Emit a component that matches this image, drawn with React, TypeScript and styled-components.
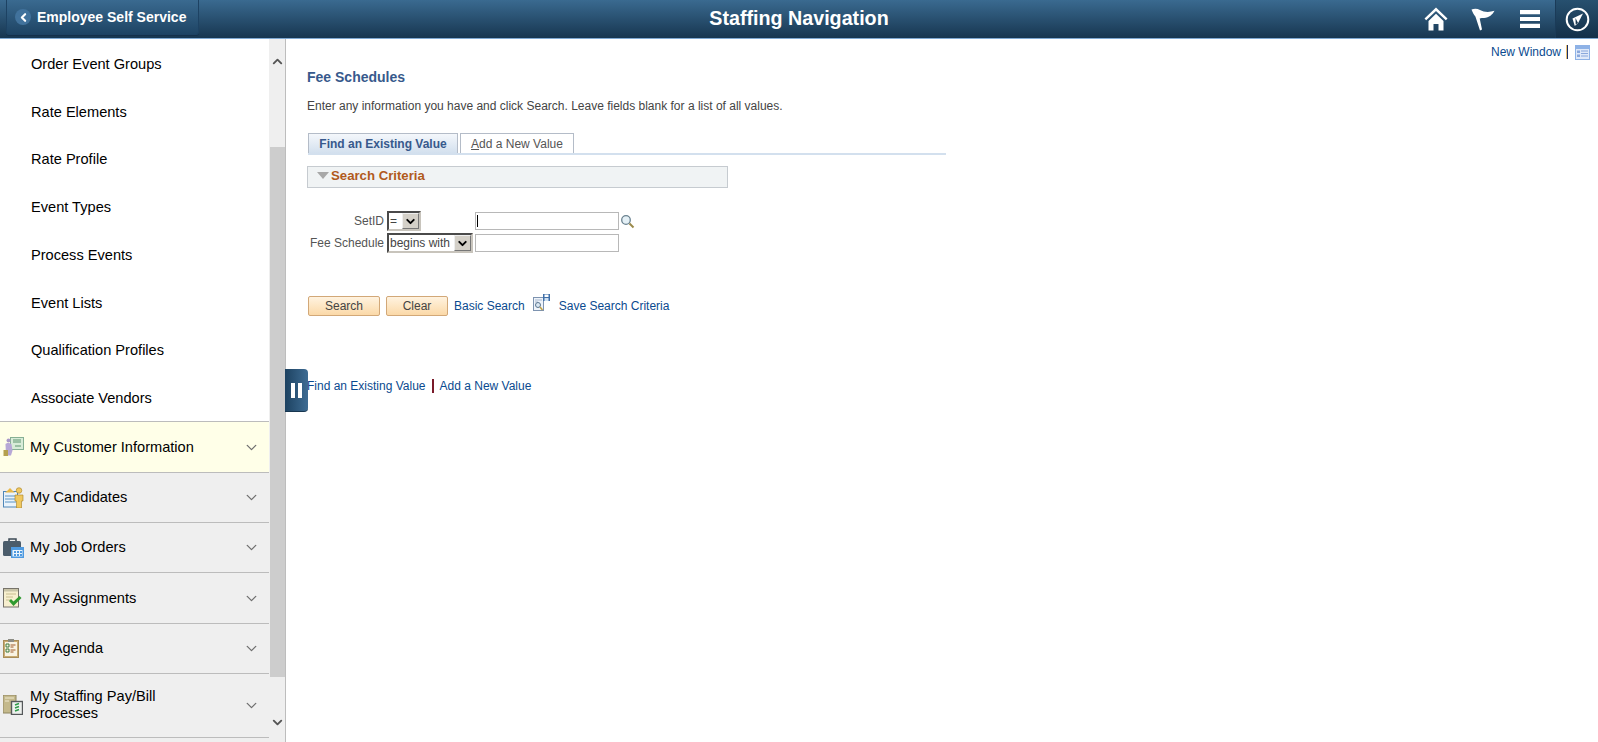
import React from 'react'
import styled, { createGlobalStyle } from 'styled-components'
import { ChevronDown, ChevronLeft, ChevronUp } from 'lucide-react'

const GlobalStyle = createGlobalStyle`
  html, body {
    margin: 0;
    padding: 0;
    height: 100%;
    overflow: hidden;
    background: #fff;
    font-family: "Liberation Sans", Arial, sans-serif;
  }
  * { box-sizing: border-box; }
`

const Page = styled.div`
  width: 1598px;
  height: 742px;
  display: flex;
  flex-direction: column;
  overflow: hidden;
`

const Banner = styled.header`
  height: 39px;
  flex: none;
  display: grid;
  grid-template-columns: 1fr auto 1fr;
  align-items: stretch;
  background: linear-gradient(#3a6a90, #173650);
  border-bottom: 1.5px solid #7fa9d3;
`

const BackButton = styled.button`
  justify-self: start;
  margin-left: 6px;
  width: 193px;
  height: 35px;
  display: flex;
  align-items: center;
  gap: 6px;
  padding: 0 0 0 8px;
  border: 1px solid #1d4263;
  border-top: 0;
  border-radius: 0 0 3px 3px;
  background: linear-gradient(#3a6a90, #1e4464);
  box-shadow: 0 1px 0 #14304a;
  color: #fff;
  font: bold 14px "Liberation Sans", Arial, sans-serif;
`

const BackDot = styled.span`
  width: 16px;
  height: 16px;
  border-radius: 50%;
  background: #41729c;
  display: flex;
  align-items: center;
  justify-content: center;
`

const BannerTitle = styled.h1`
  margin: 0;
  align-self: center;
  color: #fff;
  font-size: 19.7px;
  font-weight: bold;
  position: relative;
  top: -1px;
`

const BannerIcons = styled.div`
  justify-self: end;
  display: flex;
  align-items: stretch;
`

const BannerIcon = styled.div`
  width: 47px;
  display: flex;
  align-items: center;
  justify-content: center;
`

const NavBarButton = styled(BannerIcon)`
  width: 43px;
  margin-left: 2px;
  background: linear-gradient(#27506f, #143049);
  border-left: 1px solid #1b3b58;
`

const Body = styled.div`
  flex: 1;
  min-height: 0;
  display: flex;
  position: relative;
`

const Sidebar = styled.aside`
  width: 286px;
  flex: none;
  display: flex;
  border-right: 1px solid #bdbdbd;
`

const MenuColumn = styled.div`
  width: 269px;
  flex: none;
  display: flex;
  flex-direction: column;
  background: #efefef;
`

const SubItems = styled.div`
  height: 382.4px;
  flex: none;
  padding-top: 1px;
  background: #fff;
`

const SubItem = styled.div`
  height: 47.75px;
  padding-left: 31px;
  display: flex;
  align-items: center;
  font-size: 14.6px;
  color: #000;
`

const Folder = styled.div<{ $hover?: boolean; $tall?: boolean }>`
  height: ${({ $tall }) => ($tall ? '64.6px' : '50.33px')};
  flex: none;
  display: flex;
  align-items: center;
  border-top: 1px solid #bcbcbc;
  border-bottom: ${({ $tall }) => ($tall ? '1px solid #bcbcbc' : '0')};
  background: ${({ $hover }) => ($hover ? '#ffffe8' : '#efefef')};
  font-size: 14.6px;
  line-height: 17px;
  color: #000;
`

const FolderIconSlot = styled.div`
  width: 30px;
  flex: none;
  padding-left: 3px;
  display: flex;
`

const FolderLabel = styled.div`
  flex: 1;
  max-width: 175px;
`

const FolderChevron = styled.div`
  margin-left: auto;
  width: 26px;
  flex: none;
  color: #6e6e6e;
  display: flex;
`

const ScrollBar = styled.div`
  width: 16px;
  flex: none;
  background: #efefef;
  position: relative;
  display: flex;
  flex-direction: column;
  justify-content: space-between;
  align-items: center;
  padding: 15px 0 12px;
  color: #555;
`

const ScrollThumb = styled.div`
  position: absolute;
  left: 1px;
  right: 0;
  top: 108px;
  height: 530px;
  background: #cdcdcd;
`

const Handle = styled.div`
  position: absolute;
  left: 285px;
  top: 330px;
  width: 23px;
  height: 43px;
  border-radius: 0 4px 4px 0;
  background: linear-gradient(to right, #1d4261, #3e6c93);
  border-bottom: 1px solid #173650;
  display: flex;
  align-items: center;
  justify-content: center;
  gap: 3px;
`

const HandleBar = styled.span`
  width: 4px;
  height: 15px;
  background: #fff;
`

const Content = styled.main`
  flex: 1;
  min-width: 0;
  display: flex;
  flex-direction: column;
`

const TopLinks = styled.div`
  height: 20px;
  margin-top: 3px;
  padding-right: 8px;
  display: flex;
  justify-content: flex-end;
  align-items: center;
`

const SmallLink = styled.a`
  color: #0a4a8f;
  font-size: 12px;
  white-space: nowrap;
`

const Pipe = styled.span<{ $color?: string }>`
  width: 2px;
  height: 14px;
  background: ${({ $color }) => $color || 'linear-gradient(to right, #e8c070 50%, #1c2f66 50%)'};
`

const TopPipe = styled(Pipe)`
  margin: 0 7px 0 5px;
`

const Inner = styled.div`
  padding: 7px 0 0 21px;
  display: flex;
  flex-direction: column;
`

const PageTitle = styled.h2`
  margin: 0;
  font-size: 14px;
  line-height: 17px;
  font-weight: bold;
  color: #37598c;
`

const Hint = styled.p`
  margin: 13px 0 0;
  font-size: 12px;
  line-height: 14px;
  color: #444;
`

const Tabs = styled.div`
  margin: 20px 0 0 1px;
  width: 638px;
  height: 22px;
  display: flex;
  gap: 2px;
  align-items: flex-end;
  border-bottom: 2px solid #d3e0ee;
`

const Tab = styled.div<{ $active?: boolean }>`
  height: 20px;
  width: ${({ $active }) => ($active ? '150px' : '114px')};
  display: flex;
  align-items: center;
  justify-content: center;
  border: 1px solid #b4bcc8;
  border-bottom: 0;
  background: ${({ $active }) => ($active ? 'linear-gradient(#f4f7fb, #d3e0ee)' : '#fff')};
  font-size: 12px;
  font-weight: ${({ $active }) => ($active ? 'bold' : 'normal')};
  color: ${({ $active }) => ($active ? '#37598c' : '#555')};
`

const Collapsible = styled.div`
  margin-top: 11px;
  width: 421px;
  height: 22px;
  display: flex;
  align-items: center;
  gap: 2px;
  padding: 0 0 3px 9px;
  background: #f0f3f4;
  border: 1px solid #c6cbd0;
  font-size: 13.2px;
  font-weight: bold;
  color: #b05a1c;
`

const Triangle = styled.span`
  width: 0;
  height: 0;
  border-left: 6.5px solid transparent;
  border-right: 6.5px solid transparent;
  border-top: 7px solid #a8a8a8;
`

const Form = styled.div`
  margin-top: 22px;
  display: grid;
  grid-template-columns: 80px 88px 145px 18px;
  grid-auto-rows: 22px;
  align-items: center;
  justify-items: start;
`

const FieldLabel = styled.label`
  justify-self: end;
  padding-right: 3px;
  font-size: 12px;
  color: #555;
`

const Select = styled.div<{ $width: number }>`
  width: ${({ $width }) => $width}px;
  height: 20px;
  display: flex;
  align-items: center;
  justify-content: space-between;
  border: 2px solid;
  border-color: #4a4a4a #c8c4bc #c8c4bc #4a4a4a;
  font-size: 12px;
  color: #444;
  padding-left: 1px;
`

const SelectArrow = styled.span`
  width: 17px;
  height: 16px;
  background: #d4d0c8;
  border: 1px solid;
  border-color: #eee #777 #777 #eee;
  display: flex;
  align-items: center;
  justify-content: center;
  color: #000;
`

const TextField = styled.div<{ $focused?: boolean }>`
  width: 144px;
  height: 18px;
  border: 1px solid #b8b8b8;
  background: #fff;
  padding: 2px 0 2px 1px;
  &::before {
    content: '';
    display: ${({ $focused }) => ($focused ? 'block' : 'none')};
    width: 1px;
    height: 12px;
    background: #000;
  }
`

const Actions = styled.div`
  margin-top: 42px;
  margin-left: 1px;
  display: flex;
  align-items: center;
`

const OrangeButton = styled.button<{ $width: number }>`
  width: ${({ $width }) => $width}px;
  height: 20px;
  margin-right: 6px;
  padding: 0;
  border: 1px solid #d2a878;
  border-radius: 2px;
  background: linear-gradient(#fff3e0, #fbd9a8);
  font: 12px "Liberation Sans", Arial, sans-serif;
  color: #444;
`

const IconLink = styled.span`
  margin: -7px 9px 0 8px;
  display: flex;
`

const BottomLinks = styled.div`
  margin-top: 63px;
  display: flex;
  align-items: center;
`

const BottomPipe = styled(Pipe)`
  margin: 0 6px 0 6px;
`

const Home = () => (
  <svg width="24" height="24" viewBox="0 0 24 24">
    <path d="M12 .5.5 11.500l1.700 1.800L12 4l9.800 9.300 1.700-1.800z" fill="#fff" />
    <path d="M4.500 14 12 6.800l7.500 7.200v9.500h-5v-6.500h-5v6.500h-5z" fill="#fff" />
  </svg>
)

const Flag = () => (
  <svg width="24" height="23" viewBox="0 0 24 23">
    <path d="M.5 1.500c3-1.300 6-1 8.500.5 4 2.200 9 2.500 14.500.8-1.800 3.700-5.400 7-10.500 7.200-1.500 0-3 0-4.300.5L11 21.500l-2 1L4.400 8.500C2.800 6.500 1.300 4 .5 1.500z" fill="#fff" />
  </svg>
)

const Burger = () => (
  <svg width="20" height="18" viewBox="0 0 20 18">
    <path d="M0 0h20v4.200H0zM0 6.900h20v4.200H0zM0 13.800h20V18H0z" fill="#fff" />
  </svg>
)

const Compass = () => (
  <svg width="25" height="25" viewBox="0 0 25 25">
    <circle cx="12.500" cy="12.500" r="10.800" fill="none" stroke="#fff" strokeWidth="2" />
    <path d="M18 6.500 7.500 11.500l2.300 7.500 3.300-3z" fill="#fff" />
    <path d="M10.500 11l2.500 5-2.300 1.400z" fill="#16344e" />
  </svg>
)

const ListIcon = () => (
  <svg width="15" height="15" viewBox="0 0 15 15">
    <rect width="15" height="15" fill="#8eb2e6" />
    <rect x="1" y="4" width="13" height="10" fill="#dfe9f9" />
    <path d="M2 5.500h3V8H2zM2 9.500h3V12H2zM6 5.500h7v1H6zM6 8h7v1H6zM6 10.500h7v1H6z" fill="#8aa8dc" />
  </svg>
)

const Lookup = () => (
  <svg width="15" height="15" viewBox="0 0 15 15">
    <circle cx="6" cy="6" r="4.300" fill="#e4f0f6" stroke="#6a8290" strokeWidth="1.300" />
    <path d="m9.500 9.500 4 4" stroke="#9b8a4a" strokeWidth="2" />
  </svg>
)

const SaveSearch = () => (
  <svg width="17" height="17" viewBox="0 0 17 17">
    <rect x="0.500" y="3.500" width="10" height="13" fill="#eef3fa" stroke="#7d93b0" />
    <path d="M2 6h7M2 8h3" stroke="#a9b9cf" />
    <circle cx="5" cy="11" r="2.500" fill="#dbe8f3" stroke="#5a7591" />
    <path d="m7 13 2.500 3" stroke="#c0a040" strokeWidth="1.500" />
    <rect x="10" y="0" width="7" height="7" fill="#3f6fa8" />
    <rect x="11.500" y="0.500" width="4" height="2.500" fill="#fff" />
    <rect x="11.500" y="4" width="4" height="3" fill="#cfe0f2" />
  </svg>
)

const CustomerIcon = () => (
  <svg width="21" height="20" viewBox="0 0 21 20">
    <rect x="7.500" y="0.500" width="13" height="12" fill="#d8ecd8" stroke="#86b094" />
    <path d="M10 3h8M10 5h8M12 9h6" stroke="#5f9570" />
    <circle cx="5.500" cy="3.500" r="2" fill="#a999c8" />
    <path d="M2.500 7.500c0-2 5-2 6 0l1 6-1.500 5H3z" fill="#b7a8d6" />
    <rect x="0.500" y="13" width="4.500" height="6" fill="#b5a04e" />
  </svg>
)

const CandidateIcon = () => (
  <svg width="21" height="21" viewBox="0 0 21 21">
    <rect x="0.500" y="4.500" width="14" height="15.500" fill="#eaf3fb" stroke="#4f86b8" />
    <path d="M2 9h11M2 12h11M2 15h11" stroke="#5a94c4" />
    <path d="M4 4l3-3 3 3 2 1.500H2z" fill="#e8b848" />
    <circle cx="16" cy="3.500" r="2.800" fill="#f0c860" stroke="#a88020" strokeWidth=".6" />
    <path d="M12 8h8v6h-1.500v7h-5v-7H12z" fill="#f0c860" stroke="#a88020" strokeWidth=".6" />
  </svg>
)

const JobIcon = () => (
  <svg width="21" height="20" viewBox="0 0 21 20">
    <path d="M6 3V1h7v2" fill="none" stroke="#3d4a56" strokeWidth="1.500" />
    <rect x="0" y="3" width="18" height="15" rx="1.500" fill="#4b5c6b" />
    <rect x="8" y="9" width="13" height="11" fill="#4f9ae0" />
    <path d="M9.500 12h10v6.500h-10z" fill="#eaf4fc" />
    <path d="M11 13h2v2h-2zM14 13h2v2h-2zM17 13h2v2h-2zM11 16h2v2h-2zM14 16h2v2h-2zM17 16h2v2h-2z" fill="#4f9ae0" />
  </svg>
)

const AssignmentIcon = () => (
  <svg width="19" height="20" viewBox="0 0 19 20">
    <rect x="0.500" y="0.500" width="15" height="18.500" fill="#f7efcf" stroke="#77736a" />
    <rect x="1" y="1" width="14" height="2.500" fill="#c9c4a8" />
    <path d="M3 6h10M3 9h7M3 12h4" stroke="#c8bd90" />
    <path d="m6 13 2-2 2.500 2.500L16.500 8l2 2-8 8z" fill="#2f9a2f" />
  </svg>
)

const AgendaIcon = () => (
  <svg width="16" height="19" viewBox="0 0 16 19">
    <rect x="0.500" y="1.500" width="15" height="17" fill="#c9ab72" stroke="#a88c58" />
    <rect x="2" y="3" width="12" height="14" fill="#f9f3e2" />
    <rect x="5" y="0" width="6" height="3" fill="#8c8c84" />
    <path d="M3 5h3v3H3zM3 10h3v3H3z" fill="none" stroke="#3f7a3f" />
    <path d="M7.500 6h5M7.500 8h3M7.500 11h5M7.500 13h3" stroke="#a05a2a" />
  </svg>
)

const PayBillIcon = () => (
  <svg width="20" height="20" viewBox="0 0 20 20">
    <rect x="0" y="0" width="13" height="18" fill="#c4b98c" stroke="#8f8660" />
    <path d="M2 3h9M2 6h4" stroke="#efe9cf" />
    <rect x="8.500" y="6.500" width="11" height="13" fill="#eef1ee" stroke="#55585a" strokeWidth="1.400" />
    <path d="M12 10l4-1.500M12 13l4-1.500M12 16l4-1.500" stroke="#2f9a4a" strokeWidth="1.500" />
  </svg>
)

const subItems = [
  'Order Event Groups',
  'Rate Elements',
  'Rate Profile',
  'Event Types',
  'Process Events',
  'Event Lists',
  'Qualification Profiles',
  'Associate Vendors',
]

const folders = [
  { label: 'My Customer Information', icon: <CustomerIcon />, hover: true },
  { label: 'My Candidates', icon: <CandidateIcon /> },
  { label: 'My Job Orders', icon: <JobIcon /> },
  { label: 'My Assignments', icon: <AssignmentIcon /> },
  { label: 'My Agenda', icon: <AgendaIcon /> },
  { label: 'My Staffing Pay/Bill Processes', icon: <PayBillIcon />, tall: true },
]

export default function App() {
  return (
    <Page>
      <GlobalStyle />
      <Banner>
        <BackButton>
          <BackDot>
            <ChevronLeft size={13} color="#fff" strokeWidth={4} />
          </BackDot>
          Employee Self Service
        </BackButton>
        <BannerTitle>Staffing Navigation</BannerTitle>
        <BannerIcons>
          <BannerIcon><Home /></BannerIcon>
          <BannerIcon><Flag /></BannerIcon>
          <BannerIcon><Burger /></BannerIcon>
          <NavBarButton><Compass /></NavBarButton>
        </BannerIcons>
      </Banner>
      <Body>
        <Sidebar>
          <MenuColumn>
            <SubItems>
              {subItems.map((item) => (
                <SubItem key={item}>{item}</SubItem>
              ))}
            </SubItems>
            {folders.map((f) => (
              <Folder key={f.label} $hover={f.hover} $tall={f.tall}>
                <FolderIconSlot>{f.icon}</FolderIconSlot>
                <FolderLabel>{f.label}</FolderLabel>
                <FolderChevron>
                  <ChevronDown size={17} strokeWidth={1.8} />
                </FolderChevron>
              </Folder>
            ))}
          </MenuColumn>
          <ScrollBar>
            <ScrollThumb />
            <ChevronUp size={15} strokeWidth={3} />
            <ChevronDown size={15} strokeWidth={3} />
          </ScrollBar>
        </Sidebar>
        <Handle>
          <HandleBar />
          <HandleBar />
        </Handle>
        <Content>
          <TopLinks>
            <SmallLink>New Window</SmallLink>
            <TopPipe />
            <ListIcon />
          </TopLinks>
          <Inner>
            <PageTitle>Fee Schedules</PageTitle>
            <Hint>Enter any information you have and click Search. Leave fields blank for a list of all values.</Hint>
            <Tabs>
              <Tab $active>Find an Existing Value</Tab>
              <Tab><u>A</u>dd a New Value</Tab>
            </Tabs>
            <Collapsible>
              <Triangle />
              Search Criteria
            </Collapsible>
            <Form>
              <FieldLabel>SetID</FieldLabel>
              <Select $width={34}>
                =
                <SelectArrow><ChevronDown size={13} strokeWidth={3.5} /></SelectArrow>
              </Select>
              <TextField $focused />
              <Lookup />
              <FieldLabel>Fee Schedule</FieldLabel>
              <Select $width={86}>
                begins with
                <SelectArrow><ChevronDown size={13} strokeWidth={3.5} /></SelectArrow>
              </Select>
              <TextField />
            </Form>
            <Actions>
              <OrangeButton $width={72}>Search</OrangeButton>
              <OrangeButton $width={62}>Clear</OrangeButton>
              <SmallLink>Basic Search</SmallLink>
              <IconLink><SaveSearch /></IconLink>
              <SmallLink>Save Search Criteria</SmallLink>
            </Actions>
            <BottomLinks>
              <SmallLink>Find an Existing Value</SmallLink>
              <BottomPipe $color="#7a1a2a" />
              <SmallLink>Add a New Value</SmallLink>
            </BottomLinks>
          </Inner>
        </Content>
      </Body>
    </Page>
  )
}
